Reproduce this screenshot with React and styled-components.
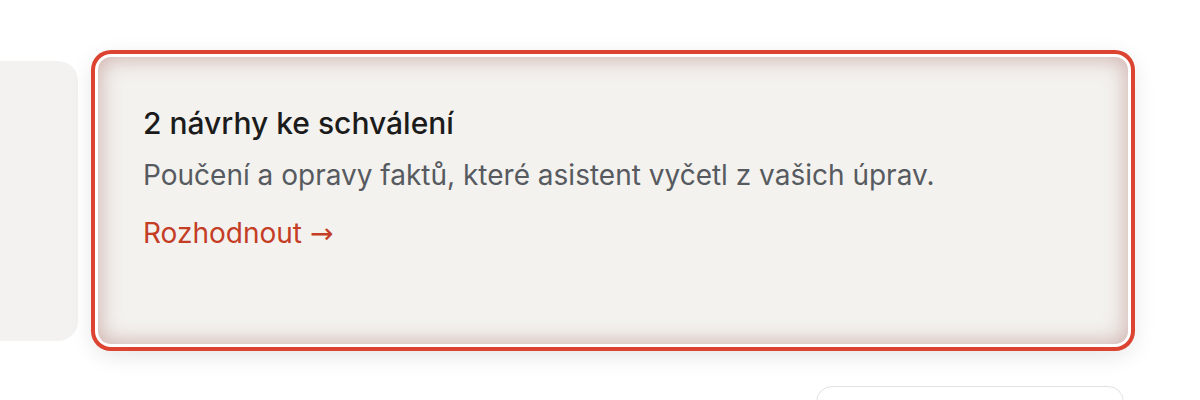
import React from "react";
import styled, { createGlobalStyle } from "styled-components";

const Global = createGlobalStyle`
  html, body { margin: 0; padding: 0; background: #ffffff; }
  body { font-family: Inter, "Noto Sans", sans-serif; overflow: hidden; }
`;

const Page = styled.div`
  width: 1200px;
  height: 400px;
  overflow: hidden;
  display: flex;
  flex-direction: column;
`;

const Track = styled.div`
  display: flex;
  align-items: center;
  gap: 20px;
  margin-top: 57px;
  margin-left: -222px;
`;

const SideCard = styled.div`
  flex: 0 0 300px;
  height: 280px;
  border-radius: 20px;
  background: #f3f2f0;
`;

const FocusCard = styled.div`
  flex: 0 0 1030px;
  height: 287px;
  box-sizing: border-box;
  border-radius: 13px;
  background: #f3f2ef;
  padding: 48px 45px;
  display: flex;
  flex-direction: column;
  box-shadow:
    0 0 0 3px #ffffff,
    0 0 0 7px #dc4330,
    0 6px 24px 4px rgba(0, 0, 0, 0.12),
    inset 0 0 20px 3px rgba(165, 100, 92, 0.42);
`;

const Title = styled.h2`
  margin: 0;
  font-size: 30px;
  font-weight: 500;
  line-height: 36px;
  color: #1b1b1b;
`;

const Desc = styled.p`
  margin: 16px 0 0;
  font-size: 28px;
  line-height: 36px;
  font-weight: 400;
  color: #575a5f;
`;

const Action = styled.a`
  margin-top: 22px;
  font-size: 28px;
  line-height: 36px;
  color: #c43d25;
  text-decoration: none;
  cursor: pointer;
  align-self: flex-start;
`;

const Arrow = styled.span`
  font-family: "DejaVu Sans", sans-serif;
`;

const BottomRow = styled.div`
  display: flex;
  justify-content: flex-end;
  padding-right: 76px;
  margin-top: 42px;
`;

const GhostButton = styled.div`
  width: 308px;
  height: 60px;
  box-sizing: border-box;
  border: 1.5px solid #e3e2e0;
  border-radius: 16px;
  background: #ffffff;
`;

export default function App() {
  return (
    <Page>
      <Global />
      <Track>
        <SideCard />
        <FocusCard>
          <Title>2 návrhy ke schválení</Title>
          <Desc>Poučení a opravy faktů, které asistent vyčetl z vašich úprav.</Desc>
          <Action>
            Rozhodnout <Arrow>→</Arrow>
          </Action>
        </FocusCard>
      </Track>
      <BottomRow>
        <GhostButton />
      </BottomRow>
    </Page>
  );
}
